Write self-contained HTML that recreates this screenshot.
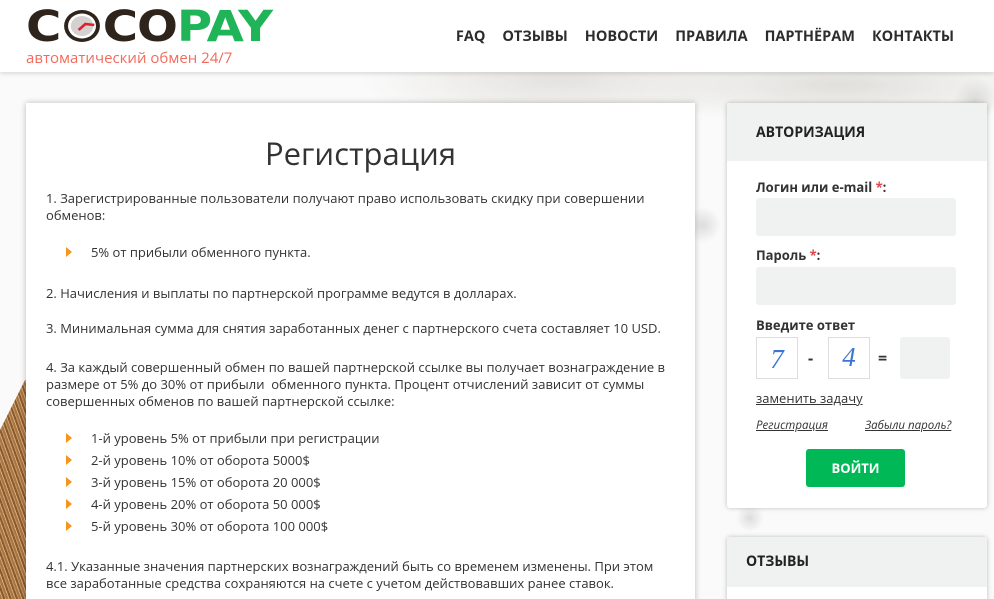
<!DOCTYPE html>
<html><head><meta charset="utf-8">
<style>
*{box-sizing:border-box;margin:0;padding:0}
html,body{width:994px;height:599px;overflow:hidden}
body{font-family:"Open Sans","Liberation Sans","DejaVu Sans",sans-serif;color:#333;position:relative;
background:
radial-gradient(ellipse 200px 45px at 560px 80px,#e4e2df 0,rgba(240,240,240,0) 100%),
radial-gradient(ellipse 220px 40px at 840px 85px,#e0dfdb 0,rgba(240,240,240,0) 100%),
radial-gradient(circle 18px at 703px 225px,#ddd 0,rgba(220,220,220,0) 100%),
radial-gradient(circle 14px at 750px 518px,#ddd 0,rgba(220,220,220,0) 100%),
radial-gradient(circle 22px at 975px 100px,#d8d8d8 0,rgba(220,220,220,0) 100%),
#fafafa;}
.header{position:absolute;left:0;top:0;width:994px;height:72px;background:#fff;box-shadow:0 2px 4px rgba(0,0,0,.12);z-index:2}
.logo{position:absolute;left:26px;top:2px;font-family:"DejaVu Sans","Liberation Sans",sans-serif;font-weight:900;font-size:43px;letter-spacing:-1px;line-height:50px;transform:scaleX(1.12);transform-origin:0 0;white-space:nowrap}
.logo .c{color:#2e241c}.logo .p{color:#1fb457}
.tag{position:absolute;left:26px;top:48px;font-size:15px;color:#f26b5e}
.nav{position:absolute;top:27px;right:40px;font-weight:bold;font-size:14.5px;color:#2c2c2c}
.nav span{margin-left:17px}
.coco{position:absolute;left:0;top:380px;width:26px;height:219px;background:repeating-linear-gradient(70deg,#a8743f 0 2px,#d3ab7e 2px 3px,#8a5a2f 3px 5px,#c59565 5px 6px);clip-path:polygon(25px 0,26px 0,26px 219px,0 219px,0 50px);}
.main{position:absolute;left:26px;top:103px;width:669px;height:520px;background:#fff;box-shadow:0 0 6px rgba(0,0,0,.25);padding:0 20px;font-size:13px;line-height:17px}
h1{font-weight:normal;font-size:31px;text-align:center;margin-top:33px;height:38px;line-height:36px;color:#333}
.main p{margin-top:16px}
ul{list-style:none;margin:16px 0 0 20px}
li{position:relative;padding-left:25px;height:22px;line-height:22px}
li:before{content:"";position:absolute;left:0;top:6px;border-left:6px solid #f7941d;border-top:5px solid transparent;border-bottom:5px solid transparent}
.side{position:absolute;left:727px;top:103px;width:260px;height:405px;background:#fff;box-shadow:0 0 5px rgba(0,0,0,.25);border-radius:3px}
.sh{background:#f0f2f1;height:58px;padding-left:29px;line-height:60px;font-weight:bold;font-size:14px;color:#222}
.lab{position:absolute;left:29px;font-weight:bold;font-size:13px;color:#333}
.lab i{color:#e0474c;font-style:normal}
.inp{position:absolute;left:29px;width:200px;height:38px;background:#f0f2f1;border-radius:3px}
.cb{position:absolute;top:234px;width:42px;height:42px;border:1px solid #ddd;font-family:"Liberation Serif",serif;font-style:italic;color:#3c75d4;font-size:27px;text-align:center;line-height:42px}
.lnk{position:absolute;font-size:12px;text-decoration:underline;color:#333}
.btn{position:absolute;left:79px;top:346px;width:99px;height:38px;background:#00b956;border-radius:3px;color:#fff;font-weight:bold;font-size:13px;text-align:center;line-height:38px}
.side2{position:absolute;left:727px;top:537px;width:260px;height:70px;background:#fff;box-shadow:0 0 5px rgba(0,0,0,.25);border-radius:3px}
</style></head><body>
<div class="header">
<div class="logo"><span class="c">C</span><svg width="38" height="36" viewBox="0 0 38 36" style="vertical-align:-3px"><circle cx="19" cy="18" r="16" fill="#2e241c"/><circle cx="19" cy="18" r="12.5" fill="#fff"/><circle cx="19" cy="18" r="10" fill="#d5d1d1"/><path d="M16 22 L22 16 L30 17" stroke="#e0202a" stroke-width="2.5" fill="none"/></svg><span class="c">CO</span><span class="p">PAY</span></div>
<div class="tag">автоматический обмен 24/7</div>
<div class="nav"><span>FAQ</span><span>ОТЗЫВЫ</span><span>НОВОСТИ</span><span>ПРАВИЛА</span><span>ПАРТНЁРАМ</span><span>КОНТАКТЫ</span></div>
</div>
<div class="coco"></div>
<div class="main">
<h1>Регистрация</h1>
<p style="margin-top:16px">1. Зарегистрированные пользователи получают право использовать скидку при совершении обменов:</p>
<ul style="margin-top:17px"><li>5% от прибыли обменного пункта.</li></ul>
<p style="margin-top:22px">2. Начисления и выплаты по партнерской программе ведутся в долларах.</p>
<p style="margin-top:18px">3. Минимальная сумма для снятия заработанных денег с партнерского счета составляет 10 USD.</p>
<p style="margin-top:22px">4. За каждый совершенный обмен по вашей партнерской ссылке вы получает вознаграждение в размере от 5% до 30% от прибыли&nbsp; обменного пункта. Процент отчислений зависит от суммы совершенных обменов по вашей партнерской ссылке:</p>
<ul style="margin-top:17px"><li>1-й уровень 5% от прибыли при регистрации</li><li>2-й уровень 10% от оборота 5000$</li><li>3-й уровень 15% от оборота 20 000$</li><li>4-й уровень 20% от оборота 50 000$</li><li>5-й уровень 30% от оборота 100 000$</li></ul>
<p style="margin-top:21px">4.1. Указанные значения партнерских вознаграждений быть со временем изменены. При этом все заработанные средства сохраняются на счете с учетом действовавших ранее ставок.</p>
</div>
<div class="side">
<div class="sh">АВТОРИЗАЦИЯ</div>
<div class="lab" style="top:75px">Логин или e-mail <i>*</i>:</div>
<div class="inp" style="top:95px"></div>
<div class="lab" style="top:143px">Пароль <i>*</i>:</div>
<div class="inp" style="top:164px"></div>
<div class="lab" style="top:213px">Введите ответ</div>
<div class="cb" style="left:29px">7</div>
<div style="position:absolute;left:81px;top:244px;font-weight:bold">-</div>
<div class="cb" style="left:101px;line-height:38px">4</div>
<div style="position:absolute;left:151px;top:244px;font-weight:bold">=</div>
<div style="position:absolute;left:173px;top:234px;width:50px;height:42px;background:#f0f2f1;border-radius:3px"></div>
<div class="lnk" style="left:29px;top:286px;font-size:13px">заменить задачу</div>
<div class="lnk" style="left:29px;top:315px;font-style:italic;font-size:11.5px">Регистрация</div>
<div class="lnk" style="left:138px;top:315px;font-style:italic;font-size:11.5px">Забыли пароль?</div>
<div class="btn">ВОЙТИ</div>
</div>
<div class="side2"><div class="sh" style="padding-left:19px;height:50px;line-height:50px">ОТЗЫВЫ</div></div>
</body></html>
